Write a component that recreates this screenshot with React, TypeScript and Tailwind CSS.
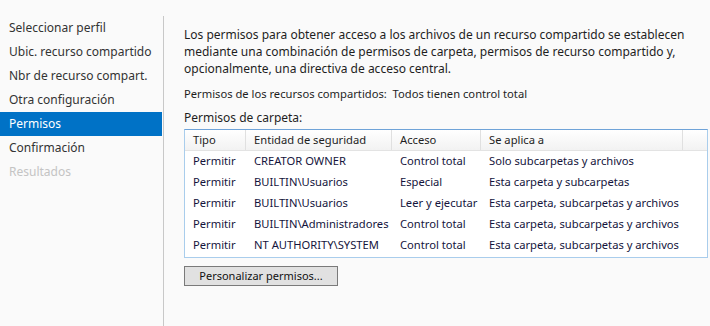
import React from "react";

const steps = [
  { label: "Seleccionar perfil" },
  { label: "Ubic. recurso compartido" },
  { label: "Nbr de recurso compart." },
  { label: "Otra configuración" },
  { label: "Permisos", active: true },
  { label: "Confirmación" },
  { label: "Resultados", disabled: true },
];

const rows = [
  ["Permitir", "CREATOR OWNER", "Control total", "Solo subcarpetas y archivos"],
  ["Permitir", "BUILTIN\\Usuarios", "Especial", "Esta carpeta y subcarpetas"],
  ["Permitir", "BUILTIN\\Usuarios", "Leer y ejecutar", "Esta carpeta, subcarpetas y archivos"],
  ["Permitir", "BUILTIN\\Administradores", "Control total", "Esta carpeta, subcarpetas y archivos"],
  ["Permitir", "NT AUTHORITY\\SYSTEM", "Control total", "Esta carpeta, subcarpetas y archivos"],
];

const cols = ["w-[61px]", "w-[146px]", "w-[89px]", "w-[202px]"];

export default function App() {
  return (
    <div className="flex h-[326px] w-[710px] overflow-hidden bg-[#fafafa] font-['Segoe_UI','Noto_Sans',sans-serif] text-[12px] text-[#1e1e1e]">
      {/* Wizard steps */}
      <nav className="mt-[16px] w-[164px] shrink-0 border-r border-[#c8c8c8]">
        {steps.map((s) => (
          <div
            key={s.label}
            className={`flex h-[24px] items-center pl-[9px] ${
              s.active
                ? "mr-px bg-[#0072c6] text-white"
                : s.disabled
                  ? "text-[#c4c4c4]"
                  : "text-[#333]"
            }`}
          >
            {s.label}
          </div>
        ))}
      </nav>

      {/* Content */}
      <main className="flex-1 pl-[20px] pt-[26px] pr-[2px]">
        <p className="leading-[17px]">
          Los permisos para obtener acceso a los archivos de un recurso compartido se establecen
          mediante una combinación de permisos de carpeta, permisos de recurso compartido y,
          opcionalmente, una directiva de acceso central.
        </p>
        <p className="mt-[8px] text-[11.2px] leading-[17px]">
          Permisos de los recursos compartidos:&nbsp; Todos tienen control total
        </p>
        <p className="mt-[7px] leading-[17px]">Permisos de carpeta:</p>

        <div className="mt-[3px] h-[129px] border border-[#a9cdec] border-t-[#6fa3d8] bg-white text-[11.2px]">
          <div className="flex h-[21px] items-center border-b border-[#e3e3e3] bg-gradient-to-b from-white to-[#f2f2f2]">
            {["Tipo", "Entidad de seguridad", "Acceso", "Se aplica a"].map((h, i) => (
              <div
                key={h}
                className={`${cols[i]} flex h-full shrink-0 items-center border-r border-[#e0e0e0] pl-[8px]`}
              >
                {h}
              </div>
            ))}
          </div>
          {rows.map((r, ri) => (
            <div key={ri} className="flex h-[21px] items-center text-[#14143c]">
              {r.map((c, i) => (
                <div key={i} className={`${cols[i]} shrink-0 whitespace-nowrap pl-[8px]`}>
                  {c}
                </div>
              ))}
            </div>
          ))}
        </div>

        <button className="mt-[8px] h-[20px] w-[154px] border border-[#7a7a7a] bg-[#e1e1e1] text-center text-[11px] leading-[18px] text-[#111]">
          Personalizar permisos...
        </button>
      </main>
    </div>
  );
}
